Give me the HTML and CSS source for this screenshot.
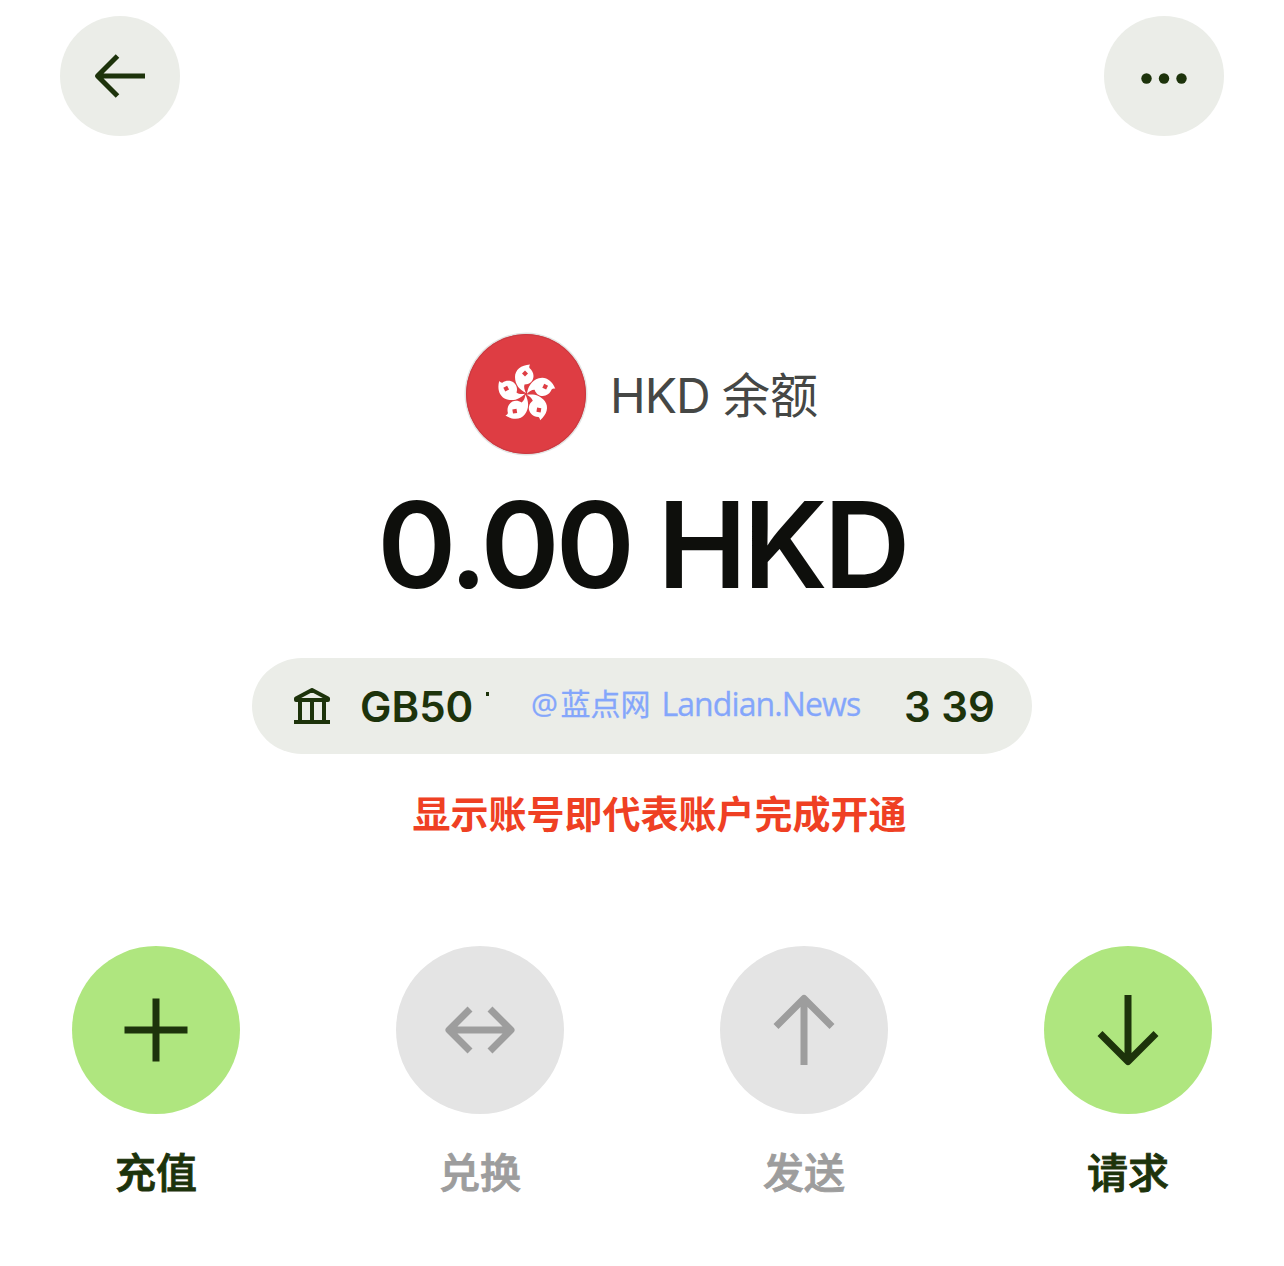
FILE: index.html
```html
<!DOCTYPE html>
<html lang="zh-CN">
<head>
<meta charset="utf-8">
<title>HKD 余额</title>
<link rel="stylesheet" href="styles.css">
</head>
<body>
<header class="topbar">
  <button class="round-button" aria-label="返回">
    <svg class="icon" viewBox="0 0 120 120" fill="none" stroke="currentColor" stroke-width="5">
      <path d="M85 60H38M57.500 40L37.500 60L57.500 80" stroke-linejoin="round"/>
    </svg>
  </button>
  <button class="round-button" aria-label="更多">
    <svg class="icon" viewBox="0 0 120 120" fill="currentColor">
      <circle cx="42.500" cy="62.500" r="5.200"/><circle cx="60" cy="62.500" r="5.200"/><circle cx="77.500" cy="62.500" r="5.200"/>
    </svg>
  </button>
</header>
<main>
  <section class="currency">
    <svg class="flag" viewBox="-62 -62 124 124">
      <defs>
        <g id="petal">
          <path fill="#fff" d="M0 -1C-6 -4 -11 -9 -11 -17C-11 -24 -5 -29 4 -29.500C3.300 -28 3 -27 3.500 -26C6 -24 7.500 -21 7.500 -18C7.500 -13 3.500 -9.500 -1.500 -9.500C-2.500 -7 -1.300 -3.500 0 -1Z"/>
          <path fill="#de3d43" d="M-1 -23.500L2 -20.500L-1 -17.500L-4 -20.500Z"/>
        </g>
      </defs>
      <circle r="61.500" fill="#e2e4e3"/>
      <circle r="60" fill="#de3d43"/>
      <circle r="59.500" fill="none" stroke="#c93a42" stroke-width="1"/>
      <use href="#petal"/>
      <use href="#petal" transform="rotate(72)"/>
      <use href="#petal" transform="rotate(144)"/>
      <use href="#petal" transform="rotate(216)"/>
      <use href="#petal" transform="rotate(288)"/>
    </svg>
    <span class="currency-name"><span class="code">HKD </span>余额</span>
  </section>
  <h1 class="amount">0.00 HKD</h1>
  <section class="account">
    <svg class="bank" viewBox="0 0 36 36" fill="none" stroke="currentColor" stroke-width="4">
      <path d="M0 34H36M6 12V34M18 12V34M30 12V34"/>
      <path d="M2 12V10.500L18 2L34 10.500V12Z" stroke-linejoin="round"/>
    </svg>
    <span class="iban-start">GB50</span>
    <i class="iban-trace"></i>
    <span class="credit"><span class="credit-cjk"><span class="at">@</span>蓝点网</span><span class="credit-latin">Landian.News</span></span>
    <span class="iban-end">3 39</span>
  </section>
  <p class="notice">显示账号即代表账户完成开通</p>
  <nav class="actions">
    <div class="action">
      <svg class="disc" viewBox="0 0 168 168" fill="none" stroke="currentColor" stroke-width="7">
        <path d="M52.500 84H115.500M84 52.500V115.500"/>
      </svg>
      <span class="label">充值</span>
    </div>
    <div class="action disabled">
      <svg class="disc" viewBox="0 0 168 168" fill="none" stroke="currentColor" stroke-width="7" stroke-linejoin="round">
        <path d="M54 84H114M74 63L53 84L74 105M94 63L115 84L94 105"/>
      </svg>
      <span class="label">兑换</span>
    </div>
    <div class="action disabled">
      <svg class="disc" viewBox="0 0 168 168" fill="none" stroke="currentColor" stroke-width="7" stroke-linejoin="round">
        <path d="M84 119V53M56 80.500L84 52.500L112 80.500"/>
      </svg>
      <span class="label">发送</span>
    </div>
    <div class="action">
      <svg class="disc" viewBox="0 0 168 168" fill="none" stroke="currentColor" stroke-width="7" stroke-linejoin="round">
        <path d="M84 49V115M56 87.500L84 115.500L112 87.500"/>
      </svg>
      <span class="label">请求</span>
    </div>
  </nav>
</main>
</body>
</html>
```
FILE: styles.css
```css
* { box-sizing: border-box; }
body {
  margin: 0;
  height: 1266px;
  background: #fff;
  color: #1d330b;
  font-family: Inter, "Noto Sans CJK SC", sans-serif;
}
.topbar {
  display: flex;
  justify-content: space-between;
  padding: 16px 60px 0;
}
.round-button {
  width: 120px;
  height: 120px;
  padding: 0;
  border: 0;
  border-radius: 50%;
  background: #ebede8;
  color: #1d330b;
}
.icon { display: block; width: 120px; height: 120px; }
main {
  display: flex;
  flex-direction: column;
  align-items: center;
  padding-top: 196px;
}
.currency {
  display: flex;
  align-items: center;
  gap: 22px;
  height: 124px;
}
.flag { width: 124px; height: 124px; }
.currency-name {
  padding-top: 3px;
  margin-right: 2px;
  font-size: 48px;
  line-height: 60px;
  color: #454745;
  white-space: nowrap;
}
.code { letter-spacing: -1px; }
.amount {
  margin: 29px 0 0;
  font-size: 120px;
  line-height: 120px;
  font-weight: 600;
  letter-spacing: -3.8px;
  color: #0e0f0c;
  white-space: nowrap;
}
.account {
  display: flex;
  align-items: center;
  width: 780px;
  height: 96px;
  margin-top: 53px;
  padding-left: 42px;
  border-radius: 50px / 48px;
  background: #ebede8;
  font-size: 42px;
  font-weight: 600;
  line-height: 50px;
  white-space: nowrap;
}
.bank { width: 36px; height: 36px; flex: none; }
.iban-start { width: 126px; margin-left: 30px; padding-top: 2px; }
.iban-trace { width: 3px; height: 4px; margin-bottom: 24px; background: #1d330b; }
.credit {
  display: flex;
  width: 330px;
  margin: 0 0 5px 42px;
  gap: 11px;
  color: #84a6fb;
  font-family: "Open Sans", "Noto Sans CJK SC", sans-serif;
  font-size: 32px;
  font-weight: 400;
  line-height: 40px;
  -webkit-text-stroke: .3px #84a6fb;
}
.credit-cjk { font-size: 30px; }
.at { letter-spacing: 2.5px; }
.credit-latin { letter-spacing: -.9px; }
.iban-end { margin-left: 43px; padding-top: 2px; }
.notice {
  margin: 32px 0 0 35px;
  font-size: 38px;
  line-height: 56px;
  font-weight: 700;
  color: #ef4023;
  white-space: nowrap;
}
.actions {
  display: flex;
  justify-content: space-between;
  width: 1140px;
  margin-top: 104px;
}
.action {
  display: flex;
  flex-direction: column;
  align-items: center;
  width: 168px;
}
.disc {
  width: 168px;
  height: 168px;
  border-radius: 50%;
  background: #afe67f;
}
.label {
  margin-top: 29px;
  font-size: 41px;
  line-height: 60px;
  font-weight: 500;
  -webkit-text-stroke: .9px currentColor;
}
.disabled { color: #9d9d9d; }
.disabled .disc { background: #e4e4e4; }
```
